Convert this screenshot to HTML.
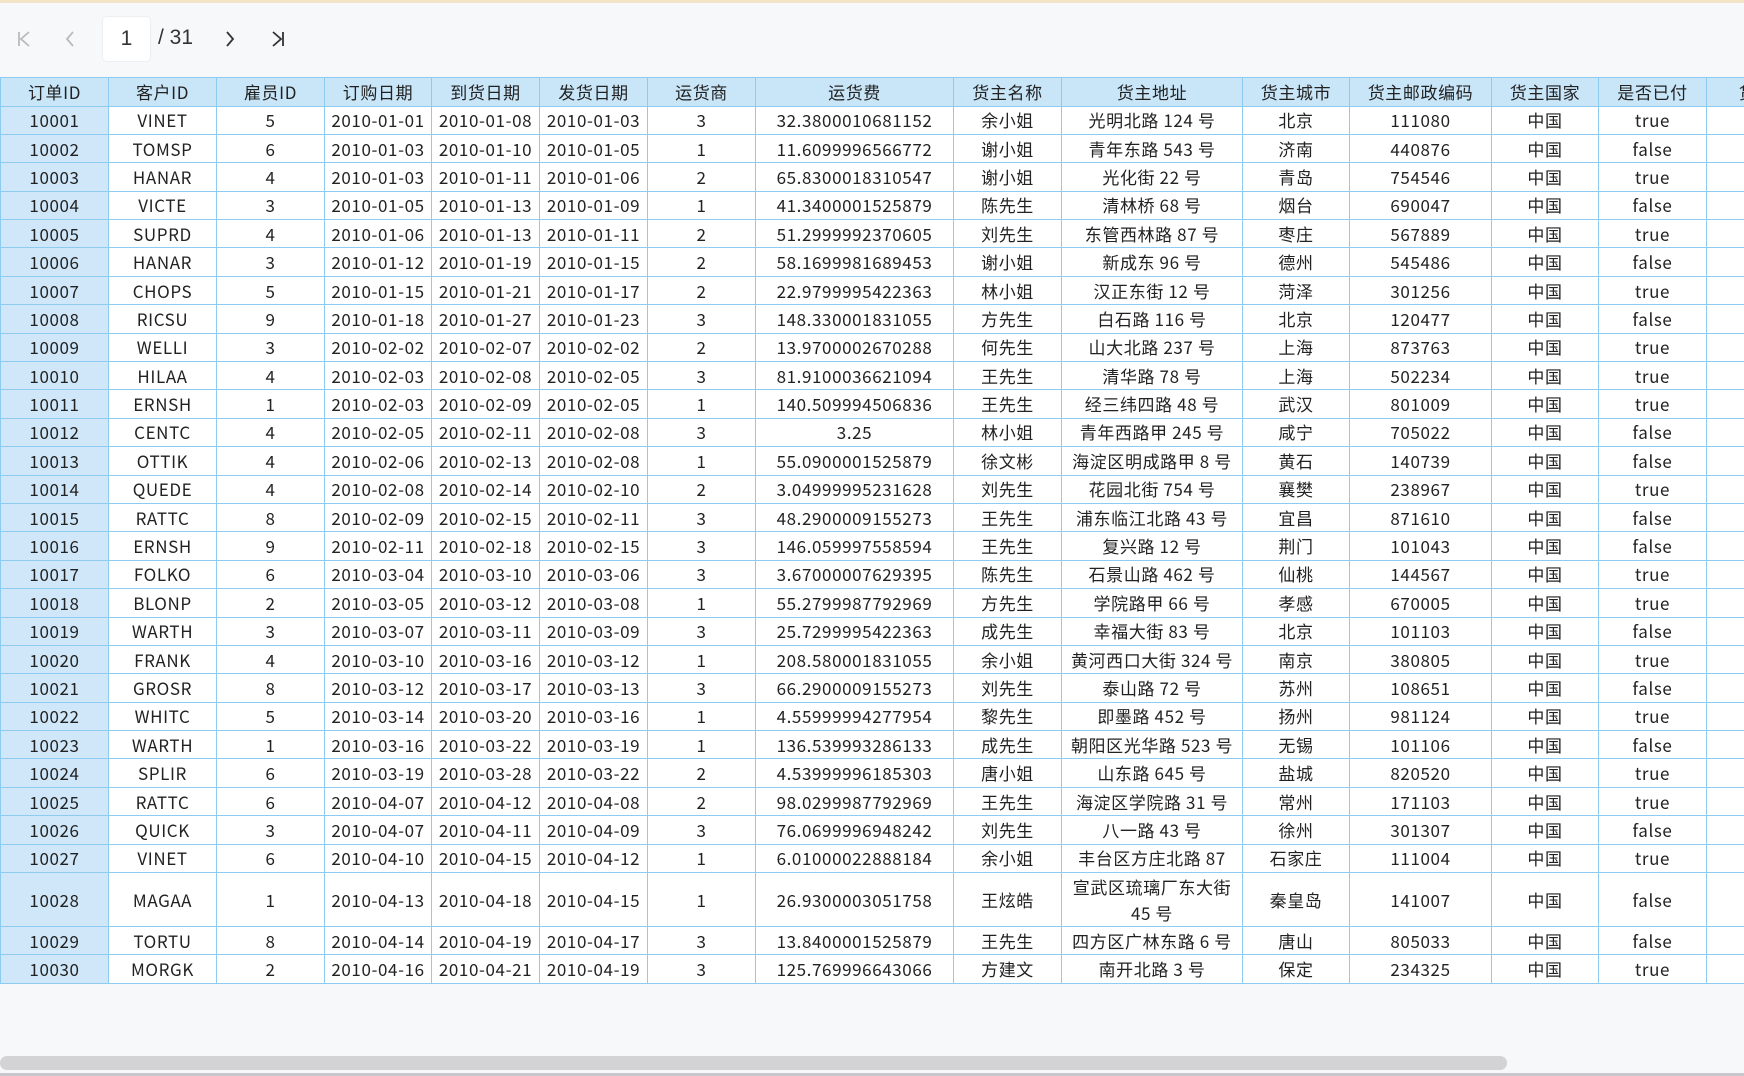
<!DOCTYPE html>
<html><head><meta charset="utf-8">
<style>
html,body{margin:0;padding:0}
body{width:1744px;height:1076px;overflow:hidden;background:#f7f8fa;position:relative;font-family:"Liberation Sans","Noto Sans CJK SC",sans-serif;color:#222}
.topline{position:absolute;left:0;top:0;width:1744px;height:3px;background:#f3e6c8}
.pager{position:absolute;top:16px;left:0;height:46px;font-size:21px;color:#333;width:400px}
.pager span{position:absolute;top:10px;white-space:nowrap}
.pager svg{position:absolute;top:14px}
.box{position:absolute;left:102px;top:0;width:49px;height:46px;background:#fff;border:1px solid #eceef2;border-radius:5px;box-sizing:border-box;text-align:center;line-height:44px;font-size:21px}
.wrap{position:absolute;left:0;top:77px;width:1744px;overflow:hidden}
table{border-collapse:collapse;table-layout:fixed;width:1806px;font-family:"Noto Sans CJK SC",sans-serif;font-size:17px;letter-spacing:0.6px}
td,th{border:1.5px solid #8dcbf0;text-align:center;padding:0;white-space:nowrap;overflow:hidden;line-height:20px}
th{background:#c9e5f8;font-weight:normal;height:27.5px;font-size:17px}
td{background:#fff;height:27.4px}
td:first-child{background:#cfe7f8}
tr.dbl td{height:53px;white-space:normal;line-height:26px}
.sb{position:absolute;left:0;top:1056px;width:1507px;height:14px;border-radius:7px;background:#d3d3d5}
.bl{position:absolute;left:0;top:1073px;width:1744px;height:3px;background:#c8c8cc}
</style></head><body>
<div class="topline"></div>
<div class="pager">
<svg style="left:16px" width="16" height="18" viewBox="0 0 16 18" fill="none" stroke="#bbb" stroke-width="1.8"><path d="M3 2v14M13 2L5 9l8 7"/></svg>
<svg style="left:64px" width="12" height="18" viewBox="0 0 12 18" fill="none" stroke="#bbb" stroke-width="1.8"><path d="M9 2L3 9l6 7"/></svg>
<div class="box">1</div>
<span style="left:158px">/ 31</span>
<svg style="left:224px" width="12" height="18" viewBox="0 0 12 18" fill="none" stroke="#333" stroke-width="1.8"><path d="M3 2l6 7-6 7"/></svg>
<svg style="left:270px" width="16" height="18" viewBox="0 0 16 18" fill="none" stroke="#333" stroke-width="1.8"><path d="M3 2l8 7-8 7M13 2v14"/></svg>
</div>
<div class="wrap">
<table>
<colgroup><col style="width:108px"><col style="width:108px"><col style="width:108px"><col style="width:107px"><col style="width:108px"><col style="width:108px"><col style="width:108px"><col style="width:198px"><col style="width:108px"><col style="width:181px"><col style="width:107px"><col style="width:142px"><col style="width:107px"><col style="width:108px"><col style="width:100px"></colgroup>
<tr><th>订单ID</th><th>客户ID</th><th>雇员ID</th><th>订购日期</th><th>到货日期</th><th>发货日期</th><th>运货商</th><th>运货费</th><th>货主名称</th><th>货主地址</th><th>货主城市</th><th>货主邮政编码</th><th>货主国家</th><th>是否已付</th><th>货主</th></tr>
<tr><td>10001</td><td>VINET</td><td>5</td><td>2010-01-01</td><td>2010-01-08</td><td>2010-01-03</td><td>3</td><td>32.3800010681152</td><td>余小姐</td><td>光明北路 124 号</td><td>北京</td><td>111080</td><td>中国</td><td>true</td><td></td></tr>
<tr><td>10002</td><td>TOMSP</td><td>6</td><td>2010-01-03</td><td>2010-01-10</td><td>2010-01-05</td><td>1</td><td>11.6099996566772</td><td>谢小姐</td><td>青年东路 543 号</td><td>济南</td><td>440876</td><td>中国</td><td>false</td><td></td></tr>
<tr><td>10003</td><td>HANAR</td><td>4</td><td>2010-01-03</td><td>2010-01-11</td><td>2010-01-06</td><td>2</td><td>65.8300018310547</td><td>谢小姐</td><td>光化街 22 号</td><td>青岛</td><td>754546</td><td>中国</td><td>true</td><td></td></tr>
<tr><td>10004</td><td>VICTE</td><td>3</td><td>2010-01-05</td><td>2010-01-13</td><td>2010-01-09</td><td>1</td><td>41.3400001525879</td><td>陈先生</td><td>清林桥 68 号</td><td>烟台</td><td>690047</td><td>中国</td><td>false</td><td></td></tr>
<tr><td>10005</td><td>SUPRD</td><td>4</td><td>2010-01-06</td><td>2010-01-13</td><td>2010-01-11</td><td>2</td><td>51.2999992370605</td><td>刘先生</td><td>东管西林路 87 号</td><td>枣庄</td><td>567889</td><td>中国</td><td>true</td><td></td></tr>
<tr><td>10006</td><td>HANAR</td><td>3</td><td>2010-01-12</td><td>2010-01-19</td><td>2010-01-15</td><td>2</td><td>58.1699981689453</td><td>谢小姐</td><td>新成东 96 号</td><td>德州</td><td>545486</td><td>中国</td><td>false</td><td></td></tr>
<tr><td>10007</td><td>CHOPS</td><td>5</td><td>2010-01-15</td><td>2010-01-21</td><td>2010-01-17</td><td>2</td><td>22.9799995422363</td><td>林小姐</td><td>汉正东街 12 号</td><td>菏泽</td><td>301256</td><td>中国</td><td>true</td><td></td></tr>
<tr><td>10008</td><td>RICSU</td><td>9</td><td>2010-01-18</td><td>2010-01-27</td><td>2010-01-23</td><td>3</td><td>148.330001831055</td><td>方先生</td><td>白石路 116 号</td><td>北京</td><td>120477</td><td>中国</td><td>false</td><td></td></tr>
<tr><td>10009</td><td>WELLI</td><td>3</td><td>2010-02-02</td><td>2010-02-07</td><td>2010-02-02</td><td>2</td><td>13.9700002670288</td><td>何先生</td><td>山大北路 237 号</td><td>上海</td><td>873763</td><td>中国</td><td>true</td><td></td></tr>
<tr><td>10010</td><td>HILAA</td><td>4</td><td>2010-02-03</td><td>2010-02-08</td><td>2010-02-05</td><td>3</td><td>81.9100036621094</td><td>王先生</td><td>清华路 78 号</td><td>上海</td><td>502234</td><td>中国</td><td>true</td><td></td></tr>
<tr><td>10011</td><td>ERNSH</td><td>1</td><td>2010-02-03</td><td>2010-02-09</td><td>2010-02-05</td><td>1</td><td>140.509994506836</td><td>王先生</td><td>经三纬四路 48 号</td><td>武汉</td><td>801009</td><td>中国</td><td>true</td><td></td></tr>
<tr><td>10012</td><td>CENTC</td><td>4</td><td>2010-02-05</td><td>2010-02-11</td><td>2010-02-08</td><td>3</td><td>3.25</td><td>林小姐</td><td>青年西路甲 245 号</td><td>咸宁</td><td>705022</td><td>中国</td><td>false</td><td></td></tr>
<tr><td>10013</td><td>OTTIK</td><td>4</td><td>2010-02-06</td><td>2010-02-13</td><td>2010-02-08</td><td>1</td><td>55.0900001525879</td><td>徐文彬</td><td>海淀区明成路甲 8 号</td><td>黄石</td><td>140739</td><td>中国</td><td>false</td><td></td></tr>
<tr><td>10014</td><td>QUEDE</td><td>4</td><td>2010-02-08</td><td>2010-02-14</td><td>2010-02-10</td><td>2</td><td>3.04999995231628</td><td>刘先生</td><td>花园北街 754 号</td><td>襄樊</td><td>238967</td><td>中国</td><td>true</td><td></td></tr>
<tr><td>10015</td><td>RATTC</td><td>8</td><td>2010-02-09</td><td>2010-02-15</td><td>2010-02-11</td><td>3</td><td>48.2900009155273</td><td>王先生</td><td>浦东临江北路 43 号</td><td>宜昌</td><td>871610</td><td>中国</td><td>false</td><td></td></tr>
<tr><td>10016</td><td>ERNSH</td><td>9</td><td>2010-02-11</td><td>2010-02-18</td><td>2010-02-15</td><td>3</td><td>146.059997558594</td><td>王先生</td><td>复兴路 12 号</td><td>荆门</td><td>101043</td><td>中国</td><td>false</td><td></td></tr>
<tr><td>10017</td><td>FOLKO</td><td>6</td><td>2010-03-04</td><td>2010-03-10</td><td>2010-03-06</td><td>3</td><td>3.67000007629395</td><td>陈先生</td><td>石景山路 462 号</td><td>仙桃</td><td>144567</td><td>中国</td><td>true</td><td></td></tr>
<tr><td>10018</td><td>BLONP</td><td>2</td><td>2010-03-05</td><td>2010-03-12</td><td>2010-03-08</td><td>1</td><td>55.2799987792969</td><td>方先生</td><td>学院路甲 66 号</td><td>孝感</td><td>670005</td><td>中国</td><td>true</td><td></td></tr>
<tr><td>10019</td><td>WARTH</td><td>3</td><td>2010-03-07</td><td>2010-03-11</td><td>2010-03-09</td><td>3</td><td>25.7299995422363</td><td>成先生</td><td>幸福大街 83 号</td><td>北京</td><td>101103</td><td>中国</td><td>false</td><td></td></tr>
<tr><td>10020</td><td>FRANK</td><td>4</td><td>2010-03-10</td><td>2010-03-16</td><td>2010-03-12</td><td>1</td><td>208.580001831055</td><td>余小姐</td><td>黄河西口大街 324 号</td><td>南京</td><td>380805</td><td>中国</td><td>true</td><td></td></tr>
<tr><td>10021</td><td>GROSR</td><td>8</td><td>2010-03-12</td><td>2010-03-17</td><td>2010-03-13</td><td>3</td><td>66.2900009155273</td><td>刘先生</td><td>泰山路 72 号</td><td>苏州</td><td>108651</td><td>中国</td><td>false</td><td></td></tr>
<tr><td>10022</td><td>WHITC</td><td>5</td><td>2010-03-14</td><td>2010-03-20</td><td>2010-03-16</td><td>1</td><td>4.55999994277954</td><td>黎先生</td><td>即墨路 452 号</td><td>扬州</td><td>981124</td><td>中国</td><td>true</td><td></td></tr>
<tr><td>10023</td><td>WARTH</td><td>1</td><td>2010-03-16</td><td>2010-03-22</td><td>2010-03-19</td><td>1</td><td>136.539993286133</td><td>成先生</td><td>朝阳区光华路 523 号</td><td>无锡</td><td>101106</td><td>中国</td><td>false</td><td></td></tr>
<tr><td>10024</td><td>SPLIR</td><td>6</td><td>2010-03-19</td><td>2010-03-28</td><td>2010-03-22</td><td>2</td><td>4.53999996185303</td><td>唐小姐</td><td>山东路 645 号</td><td>盐城</td><td>820520</td><td>中国</td><td>true</td><td></td></tr>
<tr><td>10025</td><td>RATTC</td><td>6</td><td>2010-04-07</td><td>2010-04-12</td><td>2010-04-08</td><td>2</td><td>98.0299987792969</td><td>王先生</td><td>海淀区学院路 31 号</td><td>常州</td><td>171103</td><td>中国</td><td>true</td><td></td></tr>
<tr><td>10026</td><td>QUICK</td><td>3</td><td>2010-04-07</td><td>2010-04-11</td><td>2010-04-09</td><td>3</td><td>76.0699996948242</td><td>刘先生</td><td>八一路 43 号</td><td>徐州</td><td>301307</td><td>中国</td><td>false</td><td></td></tr>
<tr><td>10027</td><td>VINET</td><td>6</td><td>2010-04-10</td><td>2010-04-15</td><td>2010-04-12</td><td>1</td><td>6.01000022888184</td><td>余小姐</td><td>丰台区方庄北路 87</td><td>石家庄</td><td>111004</td><td>中国</td><td>true</td><td></td></tr>
<tr class="dbl"><td>10028</td><td>MAGAA</td><td>1</td><td>2010-04-13</td><td>2010-04-18</td><td>2010-04-15</td><td>1</td><td>26.9300003051758</td><td>王炫皓</td><td>宣武区琉璃厂东大街<br>45 号</td><td>秦皇岛</td><td>141007</td><td>中国</td><td>false</td><td></td></tr>
<tr><td>10029</td><td>TORTU</td><td>8</td><td>2010-04-14</td><td>2010-04-19</td><td>2010-04-17</td><td>3</td><td>13.8400001525879</td><td>王先生</td><td>四方区广林东路 6 号</td><td>唐山</td><td>805033</td><td>中国</td><td>false</td><td></td></tr>
<tr><td>10030</td><td>MORGK</td><td>2</td><td>2010-04-16</td><td>2010-04-21</td><td>2010-04-19</td><td>3</td><td>125.769996643066</td><td>方建文</td><td>南开北路 3 号</td><td>保定</td><td>234325</td><td>中国</td><td>true</td><td></td></tr>
</table>
</div>
<div class="sb"></div>
<div class="bl"></div>
</body></html>
